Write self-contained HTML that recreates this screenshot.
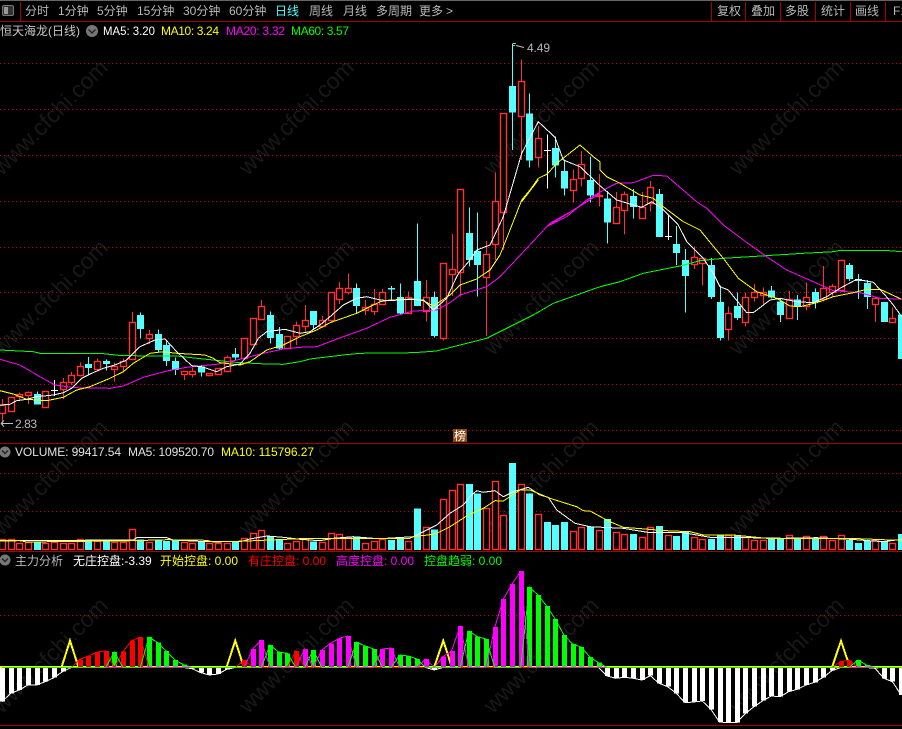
<!DOCTYPE html>
<html lang="zh"><head><meta charset="utf-8"><title>恒天海龙</title>
<style>
html,body{margin:0;padding:0;background:#000;width:902px;height:729px;overflow:hidden}
svg{display:block;position:absolute;left:0;top:0}
text{font-family:"Liberation Sans","WenQuanYi Zen Hei","Noto Sans CJK SC",sans-serif;font-size:12px}
.t{fill:#b8b8b8}
#wm text{font-size:23px;fill:#181818}
#grid,#chart{shape-rendering:crispEdges}
</style></head><body>
<svg id="s" width="902" height="729" viewBox="0 0 902 729" xmlns="http://www.w3.org/2000/svg">
<rect width="902" height="729" fill="#000"/>
<g id="wm">
<text transform="translate(50,117) rotate(-45)" text-anchor="middle" y="8">www.cfchi.com</text>
<text transform="translate(296,117) rotate(-45)" text-anchor="middle" y="8">www.cfchi.com</text>
<text transform="translate(541,117) rotate(-45)" text-anchor="middle" y="8">www.cfchi.com</text>
<text transform="translate(786,117) rotate(-45)" text-anchor="middle" y="8">www.cfchi.com</text>
<text transform="translate(50,297) rotate(-45)" text-anchor="middle" y="8">www.cfchi.com</text>
<text transform="translate(296,297) rotate(-45)" text-anchor="middle" y="8">www.cfchi.com</text>
<text transform="translate(541,297) rotate(-45)" text-anchor="middle" y="8">www.cfchi.com</text>
<text transform="translate(786,297) rotate(-45)" text-anchor="middle" y="8">www.cfchi.com</text>
<text transform="translate(50,477) rotate(-45)" text-anchor="middle" y="8">www.cfchi.com</text>
<text transform="translate(296,477) rotate(-45)" text-anchor="middle" y="8">www.cfchi.com</text>
<text transform="translate(541,477) rotate(-45)" text-anchor="middle" y="8">www.cfchi.com</text>
<text transform="translate(786,477) rotate(-45)" text-anchor="middle" y="8">www.cfchi.com</text>
<text transform="translate(50,655) rotate(-45)" text-anchor="middle" y="8">www.cfchi.com</text>
<text transform="translate(296,655) rotate(-45)" text-anchor="middle" y="8">www.cfchi.com</text>
<text transform="translate(541,655) rotate(-45)" text-anchor="middle" y="8">www.cfchi.com</text>
<text transform="translate(786,655) rotate(-45)" text-anchor="middle" y="8">www.cfchi.com</text>
</g>
<g id="grid"></g>
<g id="chart"></g>
<!-- frame -->
<rect x="0" y="0" width="902" height="1" fill="#666"/>
<rect x="0" y="21" width="902" height="1" fill="#a80000"/>
<rect x="20" y="2" width="1" height="19" fill="#a80000"/>
<rect x="711" y="2" width="1" height="19" fill="#a80000"/><rect x="745" y="2" width="1" height="19" fill="#a80000"/><rect x="780" y="2" width="1" height="19" fill="#a80000"/><rect x="815" y="2" width="1" height="19" fill="#a80000"/><rect x="850" y="2" width="1" height="19" fill="#a80000"/><rect x="885" y="2" width="1" height="19" fill="#a80000"/>
<rect x="0" y="443" width="902" height="1" fill="#a80000"/>
<rect x="0" y="551" width="902" height="1" fill="#a80000"/>
<rect x="0" y="725" width="902" height="1" fill="#a80000"/>
<!-- icon -->
<rect x="2.5" y="5.5" width="11" height="10" rx="1.5" fill="#333" stroke="#777"/>
<rect x="4" y="7" width="4" height="7" fill="#999"/>
<!-- toolbar -->
<g class="t">
<text x="25" y="15">分时</text><text x="58" y="15">1分钟</text><text x="97" y="15">5分钟</text><text x="137" y="15">15分钟</text><text x="183" y="15">30分钟</text><text x="229" y="15">60分钟</text>
<text x="275" y="15" style="fill:#54ffff">日线</text>
<text x="309" y="15">周线</text><text x="343" y="15">月线</text><text x="376" y="15">多周期</text><text x="419" y="15">更多</text><text x="446" y="15">&gt;</text>
<text x="717" y="15">复权</text><text x="751" y="15">叠加</text><text x="785" y="15">多股</text><text x="821" y="15">统计</text><text x="855" y="15">画线</text><text x="893" y="15">F10</text>
</g>
<!-- line 2 -->
<text x="0" y="35" fill="#c8c8c8">恒天海龙(日线)</text>
<circle cx="92" cy="31" r="6" fill="#777"/><path d="M88.500 29.500l3.500 3.500 3.500-3.500" fill="none" stroke="#222" stroke-width="1.400"/>
<text x="103" y="35" fill="#fff" textLength="52" lengthAdjust="spacingAndGlyphs">MA5: 3.20</text>
<text x="161" y="35" fill="#ff0" textLength="58">MA10: 3.24</text>
<text x="226" y="35" fill="#f0f" textLength="59">MA20: 3.32</text>
<text x="291" y="35" fill="#0f0" textLength="58">MA60: 3.57</text>
<!-- peak / trough labels -->
<path d="M513 43.500h3M513 45.500h2M516 45.500l8 2" stroke="#c0c0c0" stroke-width="1" fill="none"/>
<text x="527" y="52" class="t" textLength="23">4.49</text>
<path d="M1 423.500h12M1 423.500l3-3M1 423.500l3 3" stroke="#c0c0c0" stroke-width="1" fill="none"/>
<text x="15" y="428" class="t" textLength="22">2.83</text>
<!-- badge -->
<rect x="453" y="429" width="14" height="13" fill="#8a4a14"/>
<text x="454" y="440" fill="#fff">榜</text>
<!-- vol header -->
<circle cx="5" cy="452" r="5.500" fill="#777"/><path d="M2 450.500l3 3 3-3" fill="none" stroke="#222" stroke-width="1.400"/>
<text x="15" y="456" fill="#e0e0e0" textLength="106">VOLUME: 99417.54</text>
<text x="128" y="456" fill="#e0e0e0" textLength="86">MA5: 109520.70</text>
<text x="221" y="456" fill="#ff0" textLength="93">MA10: 115796.27</text>
<!-- ind header -->
<circle cx="5" cy="560" r="5.500" fill="#777"/><path d="M2 558.500l3 3 3-3" fill="none" stroke="#222" stroke-width="1.400"/>
<text x="15" y="565" class="t">主力分析</text>
<text x="73" y="565" fill="#fff">无庄控盘:-3.39</text>
<text x="160" y="565" fill="#ff0">开始控盘: 0.00</text>
<text x="248" y="565" fill="#f00">有庄控盘: 0.00</text>
<text x="336" y="565" fill="#f0f">高度控盘: 0.00</text>
<text x="424" y="565" fill="#0f0">控盘趋弱: 0.00</text>
</svg>
<script>
(function(){
var X=function(i){return 2+8.645*i};
var RED='#ff3030',CY='#54ffff';
var SR=' shape-rendering="geometricPrecision"';
var C=[
[405,412.7,399,425,'r'],[396.7,410.7,396.7,411,'r'],[394,396,392.7,400.7,'r'],[391.7,394.3,391.7,404,'r'],[394,404.7,391.7,404.7,'c'],[391.3,407.3,391.3,407.3,'r'],[390,390,380,396,'w'],[382,389,378,399,'r'],[375.3,382.7,372,385,'r'],[366.3,375.3,362.7,376.7,'r'],
[364,368,357,375,'c'],[361,368.7,358.3,371.7,'r'],[361,364,359.3,370.7,'c'],[366,368.7,362.7,381.7,'r'],[361.3,366.7,358.3,371,'r'],[322.3,359.3,312,360,'r'],[315,329,312.7,338.3,'c'],[334.3,338.7,330,344,'r'],[334,350,329.3,352.7,'c'],[345,361,340.7,366,'c'],
[361,370,357.3,375,'c'],[371.3,374,371.3,380,'r'],[371.3,374,367.3,377.3,'r'],[366.7,372.7,365,376.7,'c'],[373.3,375.3,373.3,376.7,'r'],[368.3,374,368.3,375,'r'],[357.3,371.3,355.7,371.7,'r'],[354,357.3,348,360.7,'c'],[338.3,358.3,338.3,358.7,'r'],[318.3,344,318.3,344,'r'],
[306,319,300,320,'r'],[315,338,311.7,343.3,'c'],[334,348.3,327,349.3,'c'],[336,348.3,336,348.7,'r'],[325.3,336.7,321.7,345,'r'],[320,325.7,305,333,'r'],[311,325,311,329,'c'],[320.3,326.7,316,328,'r'],[292.3,320.7,292.3,321,'r'],[288.3,299.3,282,304,'r'],
[288.3,292.3,273.3,294.3,'r'],[288,306,283.3,313.3,'c'],[306.7,309.3,300,315,'r'],[304.3,311.3,289,315,'r'],[292.3,304.3,289,305,'r'],[288,289.7,286,300.7,'c'],[297,313.3,283.3,315,'c'],[297.3,313.3,291.7,314,'r'],[281,306,223.3,306,'c'],[297.3,311,280,321.7,'r'],
[297,336,291.7,337.3,'c'],[263.3,338.3,263.3,340.7,'r'],[269.3,274.7,234,296,'r'],[189.3,272.7,189.3,296.7,'r'],[233,260,207.3,266.7,'c'],[251,265,212.3,296.7,'c'],[253.7,276.7,241,336,'r'],[201.3,244.7,172.3,260,'r'],[113.3,212.7,113.3,250,'r'],[86,112.7,43.3,150,'c'],
[81.3,116.7,59.3,160,'r'],[113.3,160.7,93.3,167.3,'c'],[138.3,157.3,126,167.7,'r'],[150,150,134.3,188.7,'w'],[148,165.7,136.7,177.7,'c'],[171,188.7,159.3,195.7,'c'],[178.7,189.3,169.3,202.7,'r'],[164.3,178.3,151,186.7,'r'],[180,195.7,156.7,202.7,'c'],[194.7,196,174,206.7,'r'],
[198.3,222.7,191,243.3,'c'],[207.3,223.3,192,223.3,'r'],[194.3,210.3,191.7,234.3,'r'],[196,207,189,218.7,'c'],[206.7,217.3,192,217.3,'r'],[187.3,203.3,181,211.7,'r'],[194,237,189,237,'c'],[236,236,215,240,'w'],[244,253,226,265,'c'],[260,276,249,312.7,'c'],
[256.7,263.7,246.3,269,'r'],[258.3,263.7,258.3,285.7,'r'],[265,297,258,299,'c'],[302,338,285.7,340.7,'c'],[313.3,329.3,306.7,340.7,'r'],[306,318,292.3,320,'c'],[297.3,322.7,292.3,326.7,'r'],[292.3,297.3,284,301.7,'r'],[292.3,295.3,287.3,304,'r'],[290.3,297.7,286,298.3,'c'],
[301.7,315,299,322,'c'],[299.3,318.3,291,319,'r'],[299.3,306,295,320,'c'],[297.3,306.3,282.3,310.7,'r'],[292,302,288.3,308.7,'c'],[288,299.3,266,301.7,'r'],[286.3,292,284,297.3,'r'],[260.3,290.3,259.3,290.7,'r'],[265,279,263,281,'c'],[279,281,274,299,'c'],
[283,297,280,309,'c'],[298,304.3,296.7,322,'r'],[302,322,302,322,'c'],[318.3,322.7,307.3,323,'r'],[314.7,359,314.7,359,'c']
];
var g='';
[63,109,155,201,247,292,338,384,430,473,511,615].forEach(function(y){g+='<line x1="0" x2="902" y1="'+y+'.5" y2="'+y+'.5" stroke="#c80000" stroke-width="1" stroke-dasharray="1 3"/>'});
document.getElementById('grid').innerHTML=g;
var h='';
function pl(off,arr){var xo=off[0],yo=off[1],p=[];arr.forEach(function(a){p.push((xo+a[0]/3).toFixed(1)+','+(yo+a[1]/3).toFixed(1))});return p.join(' ')}
function line(pts,col,w){return '<polyline points="'+pts+'" fill="none" stroke="'+col+'" stroke-width="'+(w||1)+'" stroke-linejoin="round"/>'}
C.forEach(function(c,i){var x=X(i),xm=Math.round(x)+0.5,col=c[4]=='r'?RED:(c[4]=='c'?CY:'#fff');
 var xl=Math.round(x)-3;
 h+='<line x1="'+xm+'" x2="'+xm+'" y1="'+c[2]+'" y2="'+c[3]+'" stroke="'+col+'" stroke-width="1"/>';
 if(c[4]=='c'){h+='<rect x="'+xl+'" y="'+c[0]+'" width="7" height="'+Math.max(c[1]-c[0],1.5)+'" fill="'+col+'"/>'}
 else if(c[4]=='r'){var by=Math.round(c[0])+0.5,bh=Math.max(Math.round(c[1]-c[0]),1);h+='<rect x="'+(xl+0.5)+'" y="'+by+'" width="6" height="'+bh+'" fill="#000" stroke="'+col+'" stroke-width="1.4"'+SR+'/>'}
 else{h+='<line x1="'+xl+'" x2="'+(xl+7)+'" y1="'+(c[0]+.5)+'" y2="'+(c[0]+.5)+'" stroke="#fff" stroke-width="1"/>'}
});
var z3=[0,270],z4=[300,180],z5=[440,30],z6=[600,170];
var m60=pl(z3,[[0,240],[100,245],[120,250],[300,250],[355,256],[440,258],[530,258],[590,265],[660,272],[720,278],[800,282],[850,283],[900,275]])+' '+pl(z4,[[30,537],[130,525],[180,520],[340,518],[410,513],[480,495],[560,475],[640,435],[700,405],[760,370],[830,345],[900,320]])+' '+pl(z6,[[60,335],[130,310],[240,288],[300,272],[370,265],[450,260],[530,255],[610,250],[700,245],[720,241],[850,241],[905,245]]);
var m20=pl(z3,[[0,268],[60,285],[120,320],[165,345],[225,353],[330,355],[370,348],[430,322],[500,303],[560,292],[650,283],[720,268],[790,250],[850,237],[900,232]])+' '+pl(z4,[[50,500],[130,470],[200,445],[270,412],[340,393],[410,390],[450,368],[480,345],[560,320],[600,290],[680,205],[750,130],[830,85],[900,40]])+' '+pl(z5,[[320,590],[380,560],[440,510],[500,475]])+' '+pl(z6,[[50,40],[100,38],[160,16],[200,18],[290,95],[320,115],[370,165],[430,210],[500,260],[560,300],[640,335],[700,362],[780,368],[840,385],[905,388]]);
var m10=pl(z3,[[0,362],[40,372],[80,388],[140,392],[190,382],[230,360],[270,350],[330,325],[370,305],[400,280],[450,250],[490,245],[530,250],[615,255],[640,265],[660,278],[720,285],[750,275],[800,240],[850,225],[900,200]])+' '+pl(z4,[[50,450],[90,428],[170,400],[240,365],[270,360],[340,357],[370,362],[400,378],[450,345],[480,315],[530,297],[570,270],[600,225],[630,150],[665,60],[715,0]])+' '+pl(z5,[[245,515],[295,445],[322,432],[350,400],[420,345],[460,380],[480,395]])+' '+pl(z6,[[0,0],[20,20],[60,40],[120,75],[160,85],[190,110],[250,155],[300,180],[345,235],[370,265],[415,325],[470,365],[530,385],[570,408],[600,410],[650,398],[700,380],[760,368],[800,358],[840,358],[905,388]]);
var m5=pl(z3,[[0,405],[30,403],[50,392],[80,388],[110,380],[160,375],[190,368],[215,355],[245,325],[275,310],[310,295],[345,285],[380,270],[420,230],[465,210],[495,207],[530,245],[575,287],[605,290],[650,305],[680,290],[720,282],[750,250],[775,205],[800,185],[855,178],[900,190]])+' '+pl(z4,[[30,455],[60,435],[90,410],[130,375],[170,355],[200,350],[240,360],[270,362],[320,358],[370,360],[400,390],[440,355],[470,290],[480,275],[510,240],[530,210],[570,195]])+' '+pl(z5,[[190,560],[245,370],[295,275],[345,322],[370,390],[420,410]])+' '+pl(z6,[[0,47],[50,90],[100,105],[125,112],[155,95],[185,115],[235,165],[260,215],[310,265],[340,310],[360,350],[385,360],[440,428],[460,428],[510,390],[540,385],[590,395],[640,398],[680,380],[720,355],[770,328],[820,337],[855,375],[880,405],[905,440]]);
h+=line(m60,'#00ff00')+line(m20,'#ff00ff')+line(m10,'#ffff00')+line(m5,'#ffffff');
var V1=[328,328,340,335,335,338,335,338,338,328,330,332,335,335,337,298,328,335,328,333,330,335,340,335,340,338,338,335,325,310,301,320,328,338,333,328,335,335,310,313,320,320,340,333,328,330,325,333,235,290,298,208];
var V2=[150,133,132,160,205,124,226,69,133,160,223,246,255,246,274,262,260,270,237,277,283,282,292,262,258,286,288,275,292,298,297,285,285,285,290,301,300,297,297,286,297,289,292,289,300,286,300,309,301,301,303,310,282];
var vt=[];V1.forEach(function(z){vt.push(430+z/3)});V2.forEach(function(z){vt.push(440+z/3)});
vt.forEach(function(t,i){var x=Math.round(X(i))-3,col=C[i][4];if(i==6||i==77)col='r';if(i==63)col='c';
 if(col=='c')h+='<rect x="'+x+'" y="'+t.toFixed(1)+'" width="7" height="'+(550-t).toFixed(1)+'" fill="'+CY+'"/>';
 else h+='<rect x="'+(x+.5)+'" y="'+(Math.round(t)+.5)+'" width="6" height="'+(549-Math.round(t))+'" fill="#000" stroke="'+RED+'" stroke-width="1.4"'+SR+'/>';
});
var z7=[0,430],z8=[450,440];
h+=line(pl(z7,[[0,332],[400,330],[410,323],[500,323],[520,330],[620,335],[720,335],[750,327],[800,318],[850,322],[900,328],[960,332],[1000,325],[1060,320],[1120,325],[1160,325],[1240,320],[1270,305],[1310,285],[1350,250]])+' '+pl(z8,[[40,195],[60,170],[80,152],[100,157],[135,152],[160,170],[190,155],[235,142],[270,165],[295,172],[320,210],[375,250],[420,260],[520,265],[600,278],[700,278],[780,292],[900,293],[1000,295],[1100,293],[1200,298],[1300,305],[1356,298]]),'#fff');
h+=line(pl(z7,[[0,333],[60,332],[80,336],[400,332],[500,329],[620,331],[640,336],[740,333],[900,326],[1000,326],[1160,325],[1230,325],[1240,320],[1300,313],[1320,305],[1350,290]])+' '+pl(z8,[[50,228],[100,205],[135,182],[160,183],[210,150],[240,150],[300,175],[380,200],[400,212],[420,213],[480,245],[520,262],[650,272],[720,275],[760,285],[850,285],[950,295],[1200,295],[1320,300],[1356,300]]),'#ff0');
var Y=function(z){return 550+z/3};
var I=[['w',455],['w',430],['w',420],['w',405],['w',405],['w',395],['w',383],['w',365],0,['r',328],['r',318],['r',306],['r',303],['g',306],['r',305],['r',272],['r',261],['g',261],['g',278],['g',303],['g',330],['g',344],['w',356],['w',368],['w',375],['w',372],['w',358],0,['r',330],['m',297],['m',270],['g',285],['g',306],['g',310],['r',303],
['m',297],['g',300],['m',300],['m',280],['m',265],['m',258],['g',276],['g',288],['g',297],['m',297],['m',294],['g',315],['g',318],['g',327],['m',327],['w',360],['m',320],['m',303],['m',228],['g',243],['g',260],['g',267],['m',231],['m',147],['m',102],['m',63],['g',111],['g',135],['g',168],['g',207],['g',255],['g',282],['g',291],['g',321],['g',338],
['w',378],['w',385],['w',382],['w',385],['w',390],['w',377],['w',400],['w',410],['w',430],['w',458],['w',456],['w',453],['w',478],['w',516],['w',518],['w',518],['w',490],['w',470],['w',452],['w',438],['w',440],['w',425],['w',418],['w',405],['w',397],['w',382],['w',362],['r',335],['r',331],['g',330],['g',345],['w',355],['w',385],['w',395],['w',435]];
h+='<rect x="0" y="666" width="902" height="2" fill="#ffff00"/>';
var tri=function(x0,x1,x2){return '<polyline points="'+x0.toFixed(1)+',666.7 '+x1.toFixed(1)+',640.7 '+x2.toFixed(1)+',666.7" fill="none" stroke="#ffff00" stroke-width="2" stroke-linejoin="miter"/>'};
h+=tri(61.7,70,78.3)+tri(226.7,235.3,243.7)+tri(434.3,443.3,451.7)+tri(832.3,841,849.7);
I.forEach(function(v,i){if(!v)return;var x=X(i),col=v[0],y=Y(v[1]);var c={w:'#fff',r:'#ff0000',g:'#00ff00',m:'#ff00ff'}[col];
 var xl=Math.round(x)-2;
 if(col=='w'){h+='<rect x="'+xl+'" y="668" width="5" height="'+(y-668).toFixed(1)+'" fill="#fff"/>'}
 else{h+='<rect x="'+xl+'" y="'+y.toFixed(1)+'" width="5" height="'+(668-y).toFixed(1)+'" fill="'+c+'"/>'}
});
['w','r','m','g'].forEach(function(col){var p=[];var c={w:'#fff',r:'#ff0000',g:'#00ff00',m:'#ff00ff'}[col];
 I.forEach(function(v,i){var y=(v&&v[0]==col)?Y(v[1]):667.5;p.push(X(i).toFixed(1)+','+y.toFixed(1))});
 h+=line(p.join(' '),c);
});
document.getElementById('chart').innerHTML=h;
})();
</script>
</body></html>
